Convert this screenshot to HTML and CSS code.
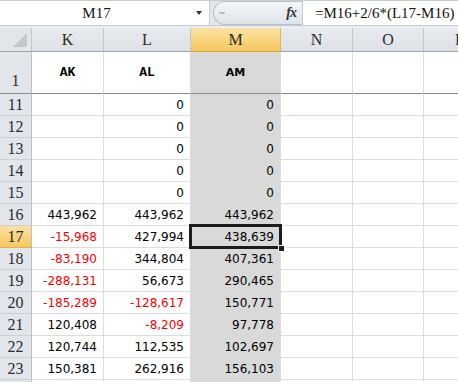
FILE: index.html
```html
<html>
  <head>
    <link rel="stylesheet" href="styles.css">
  </head>
  <body>
    <div class="formula-bar">
      <div class="name-box"><span class="name">M17</span><span class="nb-arrow"></span></div>
      <div class="fx-zone"><span class="grip"></span><span class="fx">fx</span></div>
      <div class="formula">=M16+2/6*(L17-M16)</div>
    </div>
    <div class="strip"></div>
    <div class="sheet">
      <div class="row hd">
        <div class="corner"><span class="tri"></span></div>
        <div class="ch">K</div><div class="ch">L</div><div class="ch on">M</div><div class="ch">N</div><div class="ch">O</div><div class="ch">P</div>
      </div>
      <div class="row r1">
        <div class="rh">1</div>
        <div class="c t mono">AK</div><div class="c t mono">AL</div><div class="c t m">AM</div><div class="c"></div><div class="c"></div><div class="c"></div>
      </div>
      <div class="row"><div class="rh">11</div><div class="c"></div><div class="c">0</div><div class="c m">0</div><div class="c"></div><div class="c"></div><div class="c"></div></div>
      <div class="row"><div class="rh">12</div><div class="c"></div><div class="c">0</div><div class="c m">0</div><div class="c"></div><div class="c"></div><div class="c"></div></div>
      <div class="row"><div class="rh">13</div><div class="c"></div><div class="c">0</div><div class="c m">0</div><div class="c"></div><div class="c"></div><div class="c"></div></div>
      <div class="row"><div class="rh">14</div><div class="c"></div><div class="c">0</div><div class="c m">0</div><div class="c"></div><div class="c"></div><div class="c"></div></div>
      <div class="row"><div class="rh">15</div><div class="c"></div><div class="c">0</div><div class="c m">0</div><div class="c"></div><div class="c"></div><div class="c"></div></div>
      <div class="row"><div class="rh">16</div><div class="c">443,962</div><div class="c">443,962</div><div class="c m">443,962</div><div class="c"></div><div class="c"></div><div class="c"></div></div>
      <div class="row"><div class="rh on">17</div><div class="c neg">-15,968</div><div class="c">427,994</div><div class="c m sel">438,639</div><div class="c"></div><div class="c"></div><div class="c"></div></div>
      <div class="row"><div class="rh">18</div><div class="c neg">-83,190</div><div class="c">344,804</div><div class="c m">407,361</div><div class="c"></div><div class="c"></div><div class="c"></div></div>
      <div class="row"><div class="rh">19</div><div class="c neg">-288,131</div><div class="c">56,673</div><div class="c m">290,465</div><div class="c"></div><div class="c"></div><div class="c"></div></div>
      <div class="row"><div class="rh">20</div><div class="c neg">-185,289</div><div class="c neg">-128,617</div><div class="c m">150,771</div><div class="c"></div><div class="c"></div><div class="c"></div></div>
      <div class="row"><div class="rh">21</div><div class="c">120,408</div><div class="c neg">-8,209</div><div class="c m">97,778</div><div class="c"></div><div class="c"></div><div class="c"></div></div>
      <div class="row"><div class="rh">22</div><div class="c">120,744</div><div class="c">112,535</div><div class="c m">102,697</div><div class="c"></div><div class="c"></div><div class="c"></div></div>
      <div class="row"><div class="rh">23</div><div class="c">150,381</div><div class="c">262,916</div><div class="c m">156,103</div><div class="c"></div><div class="c"></div><div class="c"></div></div>
      <div class="row"><div class="rh"></div><div class="c"></div><div class="c"></div><div class="c m"></div><div class="c"></div><div class="c"></div><div class="c"></div></div>
    </div>
  </body>
</html>
```

FILE: styles.css
```css
body {
  margin: 0;
  width: 458px;
  height: 382px;
  overflow: hidden;
  background: #ffffff;
  font-family: "DejaVu Sans", sans-serif;
}
.formula-bar {
  display: flex;
  height: 26px;
  box-sizing: border-box;
  border-top: 1px solid #c6cbd2;
  border-bottom: 1px solid #c6cbd2;
  background: #e3e7ec;
}
.name-box {
  display: flex;
  align-items: center;
  width: 209px;
  background: #ffffff;
  border-right: 1px solid #c6cbd2;
}
.name {
  width: 193px;
  text-align: center;
  font: 15px "Liberation Serif", serif;
  color: #111;
}
.nb-arrow {
  width: 0;
  height: 0;
  margin-left: 3px;
  border-left: 3px solid transparent;
  border-right: 3px solid transparent;
  border-top: 4px solid #333;
}
.fx-zone {
  display: flex;
  align-items: center;
  justify-content: space-between;
  width: 89px;
  margin: 0 0 0 3px;
  padding: 0 6px 0 5px;
  box-sizing: border-box;
  border: 1px solid #bcc1c9;
  border-right: none;
  border-radius: 12px 0 0 12px;
  background: linear-gradient(#f3f5f8, #e0e4e9);
}
.grip {
  width: 6px;
  height: 2px;
  border-radius: 1px;
  background: #b7bcc4;
}
.fx {
  font: italic bold 14px "Liberation Serif", serif;
  letter-spacing: -1px;
  color: #333;
}
.formula {
  flex: 1;
  display: flex;
  align-items: center;
  padding-left: 12px;
  background: #ffffff;
  border-left: 1px solid #c6cbd2;
  font: 15px "Liberation Serif", serif;
  color: #111;
  white-space: nowrap;
}
.strip {
  height: 2px;
  background: #e9ecf0;
}
.row {
  display: grid;
  grid-template-columns: 32px 72px 87px 90px 72px 71px 72px;
  height: 22px;
}
.row > div {
  box-sizing: border-box;
  border-right: 1px solid #dadcdd;
  border-bottom: 1px solid #dadcdd;
}
.hd {
  height: 24px;
}
.r1 {
  height: 42px;
}
.r1 > div {
  border-bottom-color: #8a8a8a;
}
.corner {
  position: relative;
  background: #e2e6eb;
}
.row > .corner,
.row > .ch {
  border-right-color: #c2c7ce;
  border-bottom-color: #9ca2aa;
}
.tri {
  position: absolute;
  right: 4px;
  bottom: 4px;
  width: 0;
  height: 0;
  border-left: 14px solid transparent;
  border-bottom: 14px solid #c3c8ce;
}
.ch {
  display: flex;
  align-items: center;
  justify-content: center;
  background: linear-gradient(#e8ebef, #dde1e6);
  font: 16px "Liberation Serif", serif;
  color: #2b2b2b;
}
.row > .ch.on {
  background: linear-gradient(#fbe3a4, #f5c65d);
  border-right-color: #e2b35a;
  border-bottom-color: #d9a441;
}
.rh {
  display: flex;
  align-items: center;
  justify-content: center;
  background: #e2e6eb;
  font: 16px "Liberation Serif", serif;
  color: #2b2b2b;
}
.row > .rh {
  border-right-color: #b9bfc7;
  border-bottom-color: #cbd0d6;
}
.r1 > .rh {
  align-items: flex-end;
  padding-bottom: 3px;
  border-bottom-color: #8a8a8a;
}
.row > .rh.on {
  background: linear-gradient(#fbe0a0, #f5c862);
  border-bottom-color: #e0b057;
}
.c {
  display: flex;
  align-items: center;
  justify-content: flex-end;
  padding-right: 6px;
  font-size: 12px;
  color: #000;
}
.neg {
  color: #ff0000;
}
.row > .m {
  background: #d9d9d9;
  border-bottom-color: #d9d9d9;
}
.r1 > .m {
  border-bottom-color: #8a8a8a;
}
.t {
  justify-content: center;
  padding-right: 0;
  font-weight: bold;
}
.mono {
  font: bold 13px "Liberation Mono", monospace;
}
.r1 > .m {
  font-size: 11px;
}
.sel {
  position: relative;
}
.sel::after {
  content: "";
  position: absolute;
  left: -2px;
  top: -2px;
  right: -2px;
  bottom: -2px;
  border: 3px solid #1c1c1c;
}
.sel::before {
  content: "";
  position: absolute;
  right: -5px;
  bottom: -5px;
  width: 5px;
  height: 5px;
  background: #1c1c1c;
  border: 1px solid #ffffff;
  z-index: 1;
}
```
